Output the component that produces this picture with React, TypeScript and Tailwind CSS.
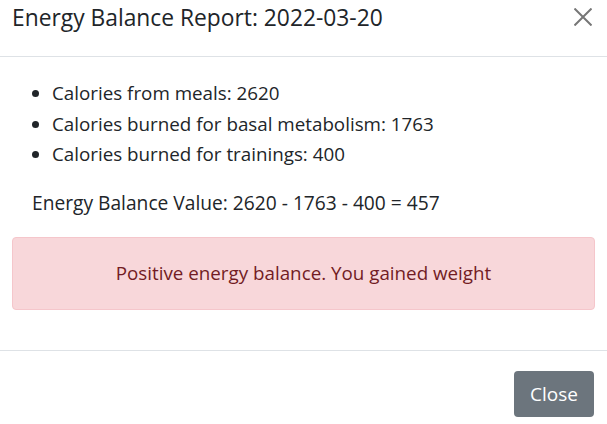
export default function App() {
  const items = [
    "Calories from meals: 2620",
    "Calories burned for basal metabolism: 1763",
    "Calories burned for trainings: 400",
  ];
  return (
    <div
      className="w-[607px] h-[424px] bg-white text-[#212529] overflow-hidden"
      style={{ fontFamily: '"Open Sans", "Noto Sans", sans-serif' }}
    >
      <div className="h-[57px] flex items-start justify-between pl-3 pr-[15px] border-b border-[#dee2e6]">
        <h5 className="text-[22.8px] leading-[36px] font-normal">Energy Balance Report: 2022-03-20</h5>
        <button className="mt-[8px] text-[#777777]">
          <svg width="18" height="18" viewBox="0 0 18 18" stroke="currentColor" strokeWidth="2" fill="none">
            <path d="M0.5 0.5 L17.5 17.5 M17.5 0.5 L0.5 17.5" />
          </svg>
        </button>
      </div>
      <div className="px-3 pt-[21px] h-[293px]">
        <ul className="list-disc pl-10 text-[18.8px] leading-[30.5px]">
          {items.map((t) => (
            <li key={t}>{t}</li>
          ))}
        </ul>
        <p className="text-[19.2px] leading-[30px] mt-[18px] pl-5">Energy Balance Value: 2620 - 1763 - 400 = 457</p>
        <div className="mt-[19px] h-[73px] flex items-center justify-center bg-[#f8d7da] border border-[#f5c6cb] rounded text-[#721c24] text-[18.8px]">
          Positive energy balance. You gained weight
        </div>
      </div>
      <div className="border-t border-[#dee2e6] flex justify-end px-[13px] pt-5">
        <button className="w-[80px] h-[46px] bg-[#6c757d] text-white rounded text-[19px]">Close</button>
      </div>
    </div>
  );
}
